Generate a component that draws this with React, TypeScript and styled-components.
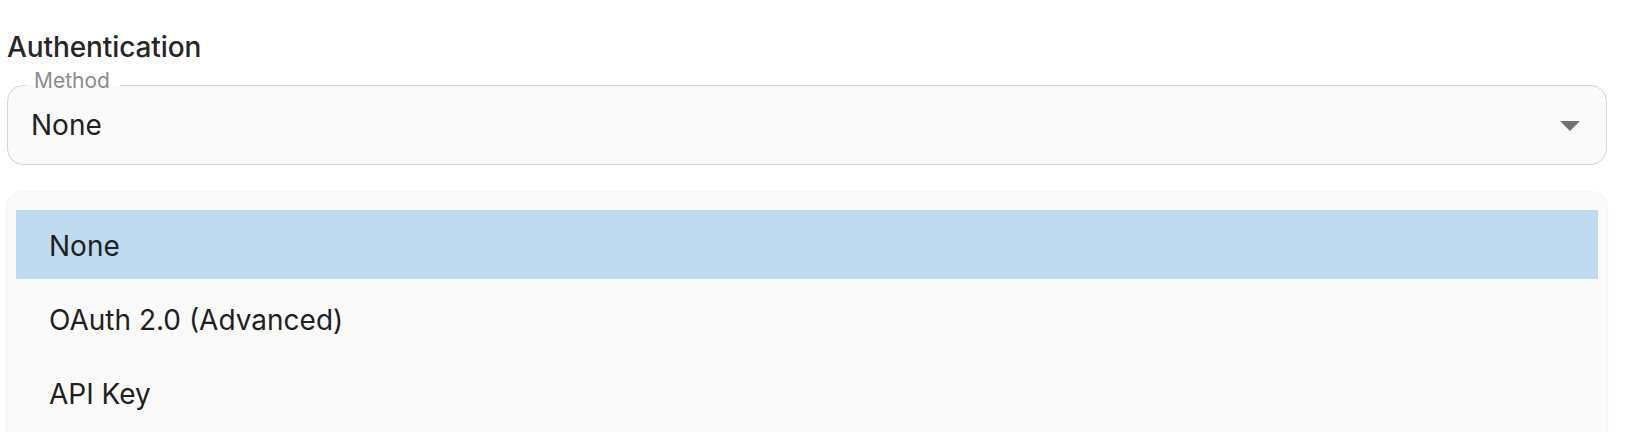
import React from "react";
import styled, { createGlobalStyle } from "styled-components";

const Global = createGlobalStyle`
  html, body { margin: 0; padding: 0; background: #ffffff; }
  body { font-family: Inter, "Noto Sans", sans-serif; color: #1f1f1f; }
`;

const Page = styled.div`
  width: 1600px;
  padding: 30px 0 0 7px;
  display: flex;
  flex-direction: column;
`;

const Title = styled.h2`
  margin: 0;
  font-size: 28px;
  line-height: 34px;
  font-weight: 500;
  color: #262626;
  letter-spacing: -0.1px;
`;

const Field = styled.div`
  position: relative;
  margin-top: 21px;
`;

const SelectBox = styled.div`
  height: 80px;
  box-sizing: border-box;
  border: 1.5px solid #d4d4d4;
  border-radius: 16px;
  background: #fafafa;
  display: flex;
  align-items: center;
  justify-content: space-between;
  padding: 0 26px 0 23px;
`;

const Label = styled.span`
  position: absolute;
  top: -14.6px;
  left: 18px;
  padding: 0 10px 0 9px;
  font-size: 21px;
  line-height: 22px;
  color: #8c8c8c;
  background: linear-gradient(to bottom, #ffffff 15.5px, #fafafa 15.5px);
`;

const Value = styled.span`
  font-size: 28px;
  line-height: 34px;
  color: #1f1f1f;
`;

const Arrow = styled.svg`
  width: 20px;
  height: 10px;
  display: block;
  margin-top: 2px;
`;

const Paper = styled.div`
  margin-top: 27px;
  background: #fafafa;
  border-radius: 16px 16px 0 0;
  box-shadow: 0 0 2px rgba(0, 0, 0, 0.1), 0 1px 4px rgba(0, 0, 0, 0.04);
  padding: 18px 9px 20px;
  display: flex;
  flex-direction: column;
  gap: 5px;
  height: 260px;
  box-sizing: border-box;
`;

const Item = styled.div<{ $selected?: boolean }>`
  height: 69px;
  display: flex;
  align-items: center;
  padding: 2px 0 0 33px;
  box-sizing: border-box;
  font-size: 28px;
  line-height: 34px;
  color: #1f1f1f;
  background: ${(p) => (p.$selected ? "#bedbef" : "transparent")};
`;

const options = ["None", "OAuth 2.0 (Advanced)", "API Key"];

export default function App() {
  return (
    <>
      <Global />
      <Page>
        <Title>Authentication</Title>
        <Field>
          <SelectBox>
            <Value>None</Value>
            <Arrow viewBox="0 0 20 10">
              <path d="M0 0 L20 0 L10 10 Z" fill="#737373" />
            </Arrow>
          </SelectBox>
          <Label>Method</Label>
        </Field>
        <Paper>
          {options.map((o, i) => (
            <Item key={o} $selected={i === 0}>
              {o}
            </Item>
          ))}
        </Paper>
      </Page>
    </>
  );
}
